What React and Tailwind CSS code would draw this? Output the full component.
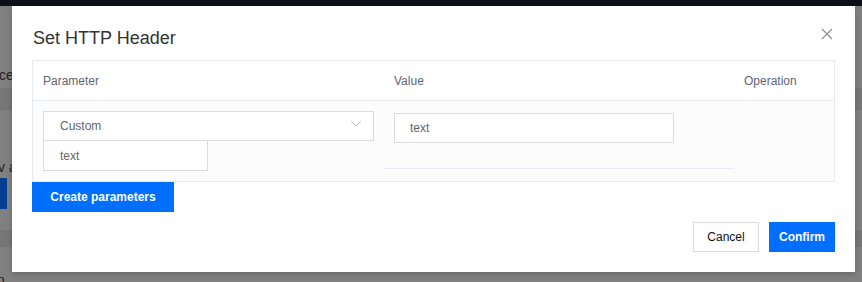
import React from 'react';

const Chevron = () => (
    <svg width="12" height="7" viewBox="0 0 12 7" fill="none" className="absolute right-[11px] top-[8px]">
        <path d="M1 1l5 5 5-5" stroke="#c4c6cc" strokeWidth="1" />
    </svg>
);

const CloseIcon = () => (
    <svg width="12" height="12" viewBox="0 0 12 12" fill="none">
        <path d="M1 1l10 10M11 1L1 11" stroke="#8a8f99" strokeWidth="1.2" />
    </svg>
);

const App = () => {
    return (
        <div className="relative w-[862px] h-[282px] overflow-hidden bg-[#808080] font-['Liberation_Sans',Arial,sans-serif]">
            {/* Page behind the overlay */}
            <div className="h-[6px] bg-[#0d1117]" />
            <div className="h-[82px] flex items-end text-[14px] leading-[16px] text-[#222] pb-[5px]">
                <span className="-ml-[1px]">ce</span>
            </div>
            <div className="h-[22px] bg-[#767676]" />
            <div className="h-[68px] flex items-end text-[14px] leading-[16px] text-[#222] pb-[3px]">
                <span className="-ml-[2px]">v a</span>
            </div>
            <div className="h-[31px] w-[7px] bg-[#003f8f]" />
            <div className="h-[21px]" />
            <div className="h-[17px] bg-[#767676]" />
            <div className="h-[35px] flex items-end text-[14px] leading-[16px] text-[#222]">
                <span className="mb-[-6px] -ml-[3px]">n</span>
            </div>

            {/* Modal */}
            <div className="absolute left-[12px] top-[6px] w-[843px] h-[266px] bg-white shadow-[0_2px_6px_rgba(0,0,0,0.2)] px-[20px] pt-[20px]">
                <button className="absolute right-[22px] top-[22px]">
                    <CloseIcon />
                </button>
                <h2 className="text-[18px] leading-[24px] text-[#333] mb-[10px] pl-[1px]">Set HTTP Header</h2>

                <div className="w-[803px] border border-[#e7eaf0]">
                    <div className="flex h-[40px] items-center border-b border-[#e7eaf0] bg-white text-[12px] text-[#5f6573]">
                        <div className="w-[351px] pl-[10px]">Parameter</div>
                        <div className="w-[350px] pl-[10px]">Value</div>
                        <div className="flex-1 pl-[10px]">Operation</div>
                    </div>
                    <div className="flex h-[80px] bg-[#fcfcfd] text-[12px] text-[#666]">
                        <div className="w-[351px] pl-[10px] pt-[10px]">
                            <div className="relative w-[331px] h-[30px] border border-[#dcdcdc] bg-white flex items-center pl-[16px]">
                                Custom
                                <Chevron />
                            </div>
                            <div className="w-[165px] h-[30px] border border-[#dcdcdc] border-t-0 bg-white flex items-center pl-[16px]">
                                text
                            </div>
                        </div>
                        <div className="w-[350px] flex flex-col">
                            <div className="h-[68px] border-b border-[#e7eaf0] pl-[10px] pt-[12px]">
                                <div className="w-[280px] h-[30px] border border-[#dcdcdc] bg-white flex items-center pl-[15px]">
                                    text
                                </div>
                            </div>
                        </div>
                        <div className="flex-1" />
                    </div>
                </div>

                <button className="w-[142px] h-[30px] bg-[#006eff] text-white text-[12px] font-bold flex items-center justify-center">
                    Create parameters
                </button>

                <div className="flex justify-end gap-[10px] mt-[10px]">
                    <button className="w-[66px] h-[30px] border border-[#dcdcdc] bg-white text-[12px] text-[#111] flex items-center justify-center">
                        Cancel
                    </button>
                    <button className="w-[66px] h-[30px] bg-[#006eff] text-white text-[12px] font-bold flex items-center justify-center">
                        Confirm
                    </button>
                </div>
            </div>
        </div>
    );
};

export default App;
